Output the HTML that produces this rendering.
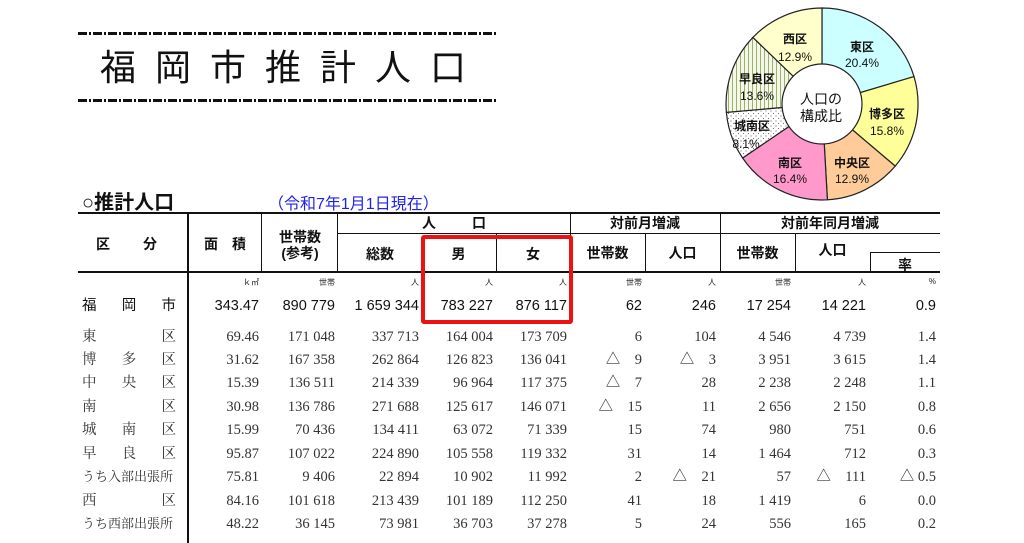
<!DOCTYPE html>
<html><head><meta charset="utf-8">
<style>
*{margin:0;padding:0;box-sizing:border-box}
body{width:1024px;height:543px;background:#fff;position:relative;overflow:hidden;font-family:"Liberation Sans","Noto Sans CJK JP",sans-serif;color:#111}
.a{position:absolute}
.dash{position:absolute;left:78px;width:418px;height:3px;background:repeating-linear-gradient(90deg,#111 0 9px,#fff 9px 11px,#111 11px 13px,#fff 13px 15px)}
.title{position:absolute;left:100px;top:46px;font-size:36px;letter-spacing:19px;font-weight:normal;color:#111;line-height:44px}
.hl{position:absolute;background:#111}
.h{position:absolute;font-size:14px;font-weight:bold;text-align:center;line-height:16px;color:#111}
.u{position:absolute;top:277px;font-size:8px;text-align:right;color:#222}
.row{position:absolute;left:82px;height:20px;display:flex;font-family:"Liberation Serif","Noto Serif CJK SC",serif;font-size:14.5px;color:#333;line-height:20px;white-space:pre}
.row .n{width:106px;display:flex;justify-content:space-between;padding-right:12px}
.row .n.s{font-size:13px;padding-right:8px}
.row .c{text-align:right}
.row.b{font-family:"Liberation Sans","Noto Sans CJK JP",sans-serif;color:#111;font-size:14.5px}
</style></head><body>

<div class="dash" style="top:32px"></div>
<div class="dash" style="top:99px"></div>
<div class="title">福岡市推計人口</div>

<div class="a" style="left:82px;top:186px;font-size:20px;font-weight:bold;color:#111">○推計人口</div>
<div class="a" style="left:268px;top:190px;font-size:16px;color:#2222ee">（令和7年1月1日現在）</div>

<svg class="a" style="left:700px;top:0" width="250" height="210" viewBox="700 0 250 210">
<defs>
<pattern id="st" width="4" height="4" patternUnits="userSpaceOnUse"><rect width="4" height="4" fill="#f4f8e6"/><rect width="1" height="4" fill="#9bb070"/></pattern>
<pattern id="dt" width="5" height="5" patternUnits="userSpaceOnUse"><rect width="5" height="5" fill="#fff"/><circle cx="1" cy="1" r="0.6" fill="#777"/><circle cx="3.5" cy="3.5" r="0.6" fill="#777"/></pattern>
</defs>
<g stroke="#222" stroke-width="1.2">
<path d="M822 104 L822 8 A96 96 0 0 1 914 76.6 Z" fill="#ccffff"/>
<path d="M822 104 L914 76.6 A96 96 0 0 1 895.2 166.1 Z" fill="#ffff99"/>
<path d="M822 104 L895.2 166.1 A96 96 0 0 1 827.4 199.8 Z" fill="#ffcc99"/>
<path d="M822 104 L827.4 199.8 A96 96 0 0 1 742.6 158 Z" fill="#ff99cc"/>
<path d="M822 104 L742.6 158 A96 96 0 0 1 726.4 112.4 Z" fill="url(#dt)"/>
<path d="M822 104 L726.4 112.4 A96 96 0 0 1 752.9 37.4 Z" fill="url(#st)"/>
<path d="M822 104 L752.9 37.4 A96 96 0 0 1 822 8 Z" fill="#ffffcc"/>
<circle cx="822" cy="104" r="40" fill="#fff"/>
</g>
<g font-family="Liberation Sans,Noto Sans CJK JP,sans-serif" font-size="12" text-anchor="middle" fill="#111">
<text x="795" y="43" font-weight="bold">西区</text><text x="795" y="61">12.9%</text>
<text x="862" y="51" font-weight="bold">東区</text><text x="862" y="67">20.4%</text>
<text x="887" y="118" font-weight="bold">博多区</text><text x="887" y="135">15.8%</text>
<text x="852" y="167" font-weight="bold">中央区</text><text x="852" y="183">12.9%</text>
<text x="790" y="167" font-weight="bold">南区</text><text x="790" y="183">16.4%</text>
<text x="752" y="130" font-weight="bold">城南区</text><text x="746" y="148">8.1%</text>
<text x="757" y="83" font-weight="bold">早良区</text><text x="757" y="100">13.6%</text>
<text x="821" y="104" font-size="14">人口の</text><text x="821" y="121" font-size="14">構成比</text>
</g>
</svg>

<!-- table lines -->
<div class="hl" style="left:78px;top:212px;width:862px;height:2px"></div>
<div class="hl" style="left:338px;top:233px;width:602px;height:1px"></div>
<div class="hl" style="left:870px;top:252px;width:70px;height:1px"></div>
<div class="hl" style="left:78px;top:271px;width:862px;height:2px"></div>
<div class="hl" style="left:187px;top:212px;width:2px;height:331px"></div>
<div class="hl" style="left:261px;top:212px;width:1px;height:60px"></div>
<div class="hl" style="left:337px;top:212px;width:1px;height:60px"></div>
<div class="hl" style="left:570px;top:212px;width:1px;height:60px"></div>
<div class="hl" style="left:496px;top:234px;width:1px;height:38px"></div>
<div class="hl" style="left:645px;top:234px;width:1px;height:38px"></div>
<div class="hl" style="left:720px;top:212px;width:1px;height:60px"></div>
<div class="hl" style="left:795px;top:234px;width:1px;height:38px"></div>
<div class="hl" style="left:870px;top:252px;width:1px;height:20px"></div>

<!-- headers -->
<div class="h" style="left:96px;top:236px">区</div>
<div class="h" style="left:143px;top:236px">分</div>
<div class="h" style="left:204px;top:236px">面　積</div>
<div class="h" style="left:262px;top:229px;width:76px">世帯数<br>(参考)</div>
<div class="h" style="left:422px;top:215px">人</div>
<div class="h" style="left:472px;top:215px">口</div>
<div class="h" style="left:338px;top:246px;width:84px">総数</div>
<div class="h" style="left:421px;top:246px;width:75px">男</div>
<div class="h" style="left:496px;top:246px;width:74px">女</div>
<div class="h" style="left:570px;top:215px;width:150px">対前月増減</div>
<div class="h" style="left:570px;top:245px;width:75px">世帯数</div>
<div class="h" style="left:645px;top:245px;width:75px">人口</div>
<div class="h" style="left:720px;top:215px;width:220px">対前年同月増減</div>
<div class="h" style="left:720px;top:245px;width:75px">世帯数</div>
<div class="h" style="left:795px;top:242px;width:75px">人口</div>
<div class="h" style="left:870px;top:257px;width:70px">率</div>

<!-- units -->
<div class="u" style="left:200px;width:59px">ｋ㎡</div>
<div class="u" style="left:280px;width:55px">世帯</div>
<div class="u" style="left:360px;width:59px">人</div>
<div class="u" style="left:440px;width:53px">人</div>
<div class="u" style="left:510px;width:57px">人</div>
<div class="u" style="left:590px;width:52px">世帯</div>
<div class="u" style="left:660px;width:56px">人</div>
<div class="u" style="left:740px;width:51px">世帯</div>
<div class="u" style="left:810px;width:56px">人</div>
<div class="u" style="left:880px;width:56px">%</div>

<div class="row b" style="top:296px"><div class="n"><span>福</span><span>岡</span><span>市</span></div><div class="c" style="width:71px">343.47</div><div class="c" style="width:76px">890 779</div><div class="c" style="width:84px">1 659 344</div><div class="c" style="width:74px">783 227</div><div class="c" style="width:74px">876 117</div><div class="c" style="width:75px">62</div><div class="c" style="width:74px">246</div><div class="c" style="width:75px">17 254</div><div class="c" style="width:75px">14 221</div><div class="c" style="width:70px">0.9</div></div>

<div class="row" style="top:327px"><div class="n"><span>東</span><span>区</span></div><div class="c" style="width:71px">69.46</div><div class="c" style="width:76px">171 048</div><div class="c" style="width:84px">337 713</div><div class="c" style="width:74px">164 004</div><div class="c" style="width:74px">173 709</div><div class="c" style="width:75px">6</div><div class="c" style="width:74px">104</div><div class="c" style="width:75px">4 546</div><div class="c" style="width:75px">4 739</div><div class="c" style="width:70px">1.4</div></div>

<div class="row" style="top:350px"><div class="n"><span>博</span><span>多</span><span>区</span></div><div class="c" style="width:71px">31.62</div><div class="c" style="width:76px">167 358</div><div class="c" style="width:84px">262 864</div><div class="c" style="width:74px">126 823</div><div class="c" style="width:74px">136 041</div><div class="c" style="width:75px">△    9</div><div class="c" style="width:74px">△    3</div><div class="c" style="width:75px">3 951</div><div class="c" style="width:75px">3 615</div><div class="c" style="width:70px">1.4</div></div>

<div class="row" style="top:373px"><div class="n"><span>中</span><span>央</span><span>区</span></div><div class="c" style="width:71px">15.39</div><div class="c" style="width:76px">136 511</div><div class="c" style="width:84px">214 339</div><div class="c" style="width:74px">96 964</div><div class="c" style="width:74px">117 375</div><div class="c" style="width:75px">△    7</div><div class="c" style="width:74px">28</div><div class="c" style="width:75px">2 238</div><div class="c" style="width:75px">2 248</div><div class="c" style="width:70px">1.1</div></div>

<div class="row" style="top:397px"><div class="n"><span>南</span><span>区</span></div><div class="c" style="width:71px">30.98</div><div class="c" style="width:76px">136 786</div><div class="c" style="width:84px">271 688</div><div class="c" style="width:74px">125 617</div><div class="c" style="width:74px">146 071</div><div class="c" style="width:75px">△    15</div><div class="c" style="width:74px">11</div><div class="c" style="width:75px">2 656</div><div class="c" style="width:75px">2 150</div><div class="c" style="width:70px">0.8</div></div>

<div class="row" style="top:420px"><div class="n"><span>城</span><span>南</span><span>区</span></div><div class="c" style="width:71px">15.99</div><div class="c" style="width:76px">70 436</div><div class="c" style="width:84px">134 411</div><div class="c" style="width:74px">63 072</div><div class="c" style="width:74px">71 339</div><div class="c" style="width:75px">15</div><div class="c" style="width:74px">74</div><div class="c" style="width:75px">980</div><div class="c" style="width:75px">751</div><div class="c" style="width:70px">0.6</div></div>

<div class="row" style="top:444px"><div class="n"><span>早</span><span>良</span><span>区</span></div><div class="c" style="width:71px">95.87</div><div class="c" style="width:76px">107 022</div><div class="c" style="width:84px">224 890</div><div class="c" style="width:74px">105 558</div><div class="c" style="width:74px">119 332</div><div class="c" style="width:75px">31</div><div class="c" style="width:74px">14</div><div class="c" style="width:75px">1 464</div><div class="c" style="width:75px">712</div><div class="c" style="width:70px">0.3</div></div>

<div class="row" style="top:467px"><div class="n s"><span>うち入部出張所</span></div><div class="c" style="width:71px">75.81</div><div class="c" style="width:76px">9 406</div><div class="c" style="width:84px">22 894</div><div class="c" style="width:74px">10 902</div><div class="c" style="width:74px">11 992</div><div class="c" style="width:75px">2</div><div class="c" style="width:74px">△    21</div><div class="c" style="width:75px">57</div><div class="c" style="width:75px">△    111</div><div class="c" style="width:70px">△ 0.5</div></div>

<div class="row" style="top:491px"><div class="n"><span>西</span><span>区</span></div><div class="c" style="width:71px">84.16</div><div class="c" style="width:76px">101 618</div><div class="c" style="width:84px">213 439</div><div class="c" style="width:74px">101 189</div><div class="c" style="width:74px">112 250</div><div class="c" style="width:75px">41</div><div class="c" style="width:74px">18</div><div class="c" style="width:75px">1 419</div><div class="c" style="width:75px">6</div><div class="c" style="width:70px">0.0</div></div>

<div class="row" style="top:514px"><div class="n s"><span>うち西部出張所</span></div><div class="c" style="width:71px">48.22</div><div class="c" style="width:76px">36 145</div><div class="c" style="width:84px">73 981</div><div class="c" style="width:74px">36 703</div><div class="c" style="width:74px">37 278</div><div class="c" style="width:75px">5</div><div class="c" style="width:74px">24</div><div class="c" style="width:75px">556</div><div class="c" style="width:75px">165</div><div class="c" style="width:70px">0.2</div></div>

<!-- red highlight -->
<div class="a" style="left:421px;top:235px;width:152px;height:89px;border:4px solid #ee1111;border-radius:3px"></div>
</body></html>
